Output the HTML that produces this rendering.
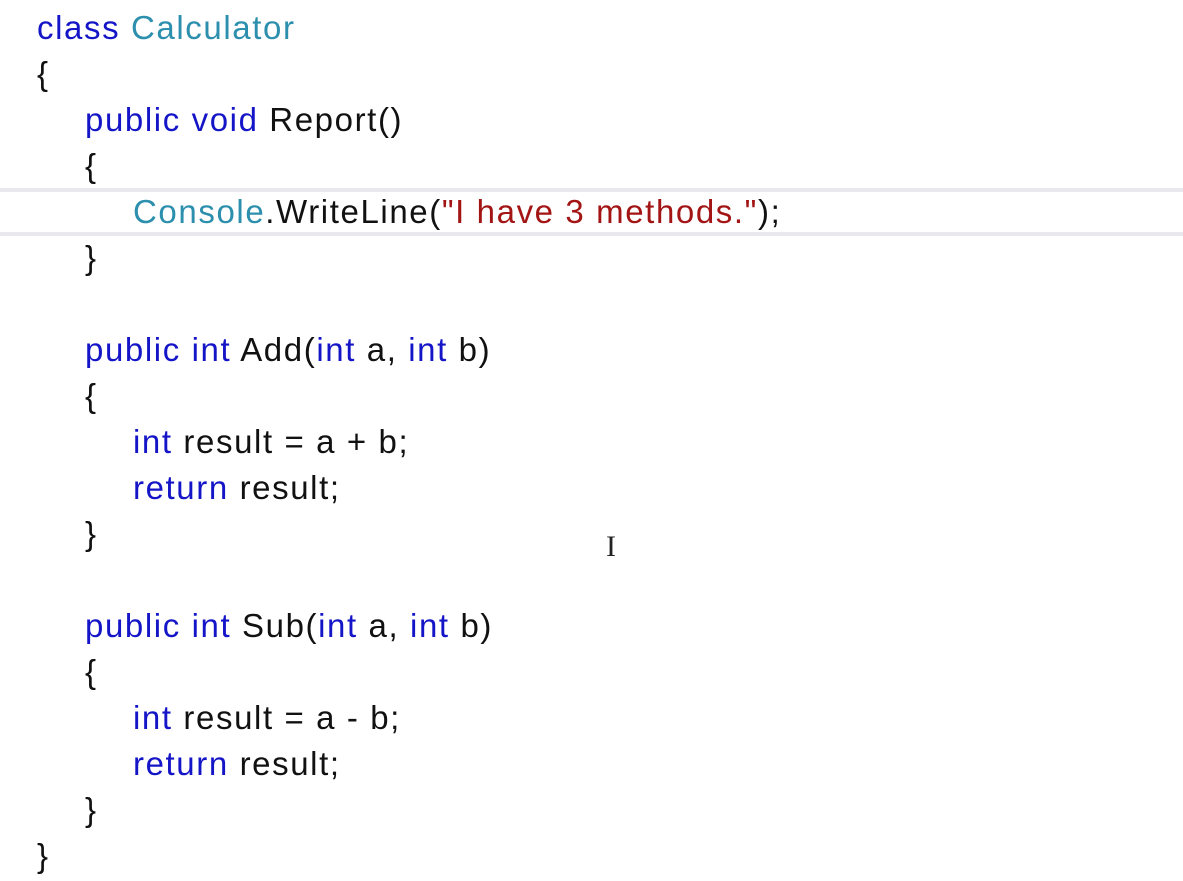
<!DOCTYPE html>
<html><head><style>
body{margin:0;width:1183px;height:881px;background:#fff;overflow:hidden;position:relative;font-family:"Liberation Sans",sans-serif;}
.hl{position:absolute;left:0;width:1183px;top:188px;height:40px;border-top:4px solid #e8e8ee;border-bottom:4px solid #e8e8ee;box-sizing:content-box;}
.code{position:absolute;left:37px;top:5px;font-size:33px;line-height:46px;letter-spacing:1.6px;color:#111;}
.l{height:46px;white-space:pre}
.k{color:#1515c8}.t{color:#2b8fad}.s{color:#a31515}
.i1{padding-left:48px}.i2{padding-left:96px}
.cur{position:absolute;left:606px;top:530px;font-family:"Liberation Serif",serif;font-size:30px;color:#222}
</style></head><body>
<div class="hl"></div>
<div class="code"><div class="l"><span class="k">class</span> <span class="t">Calculator</span></div><div class="l">{</div><div class="l i1"><span class="k">public void</span> Report()</div><div class="l i1">{</div><div class="l i2"><span class="t">Console</span>.WriteLine(<span class="s">"I have 3 methods."</span>);</div><div class="l i1">}</div><div class="l"></div><div class="l i1"><span class="k">public int</span> Add(<span class="k">int</span> a, <span class="k">int</span> b)</div><div class="l i1">{</div><div class="l i2"><span class="k">int</span> result = a + b;</div><div class="l i2"><span class="k">return</span> result;</div><div class="l i1">}</div><div class="l"></div><div class="l i1"><span class="k">public int</span> Sub(<span class="k">int</span> a, <span class="k">int</span> b)</div><div class="l i1">{</div><div class="l i2"><span class="k">int</span> result = a - b;</div><div class="l i2"><span class="k">return</span> result;</div><div class="l i1">}</div><div class="l">}</div></div>
<div class="cur">I</div>
</body></html>
